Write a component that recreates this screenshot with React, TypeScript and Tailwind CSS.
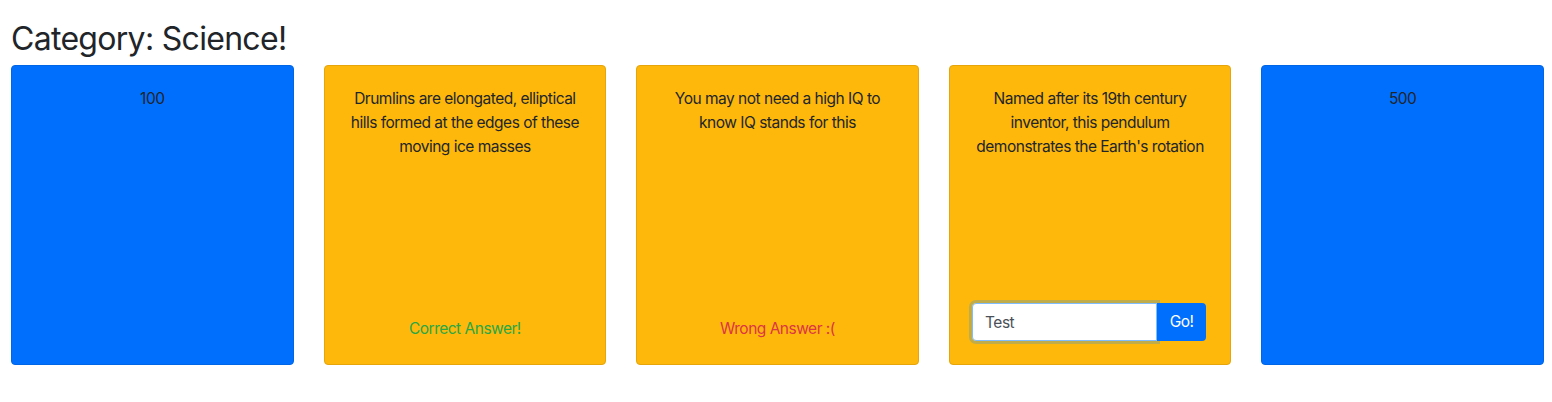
import React from "react";

type Clue = {
  kind: "value" | "question";
  text: string;
  footer?: "correct" | "wrong" | "form";
};

const clues: Clue[] = [
  { kind: "value", text: "100" },
  {
    kind: "question",
    text: "Drumlins are elongated, elliptical hills formed at the edges of these moving ice masses",
    footer: "correct",
  },
  {
    kind: "question",
    text: "You may not need a high IQ to know IQ stands for this",
    footer: "wrong",
  },
  {
    kind: "question",
    text: "Named after its 19th century inventor, this pendulum demonstrates the Earth's rotation",
    footer: "form",
  },
  { kind: "value", text: "500" },
];

function AnswerForm() {
  return (
    <div className="flex justify-center">
      <div className="flex w-[234px] -translate-x-px">
        <div className="flex-1 rounded-l-[4px] shadow-[0_0_0_3px_#c0ac4a]">
          <input
            defaultValue="Test"
            className="h-[38px] w-full rounded-l-[4px] border border-[#80bdff] bg-white px-3 text-[15.5px] tracking-[-0.5px] text-[#495057] outline-none"
          />
        </div>
        <button className="h-[38px] w-[49px] rounded-r-[4px] bg-[#006ffe] text-[15.5px] tracking-[-0.5px] text-white">
          Go!
        </button>
      </div>
    </div>
  );
}

function ClueCard({ clue }: { clue: Clue }) {
  const isValue = clue.kind === "value";
  return (
    <div
      className={`flex h-[300px] flex-1 flex-col justify-between rounded-[4px] border px-5 pt-[21px] pb-[23px] text-center text-[15.5px] leading-6 tracking-[-0.5px] ${
        isValue ? "border-[#0066e6] bg-[#006ffe]" : "border-[#e5a50b] bg-[#feb80b]"
      }`}
    >
      <p className="text-[#212529]">{clue.text}</p>
      {clue.footer === "correct" && <p className="text-[#28a745]">Correct Answer!</p>}
      {clue.footer === "wrong" && <p className="text-[#dc3545]">Wrong Answer :(</p>}
      {clue.footer === "form" && <AnswerForm />}
    </div>
  );
}

export default function App() {
  return (
    <div className="min-h-[402px] bg-white pt-5 pl-[11px] pr-[8px] font-['Inter',sans-serif] text-[#212529]">
      <h2 className="mb-[7px] text-[32px] leading-[1.2] font-normal tracking-[-0.7px]">
        Category: Science!
      </h2>
      <div className="flex gap-[30px]">
        {clues.map((clue, i) => (
          <ClueCard key={i} clue={clue} />
        ))}
      </div>
    </div>
  );
}
